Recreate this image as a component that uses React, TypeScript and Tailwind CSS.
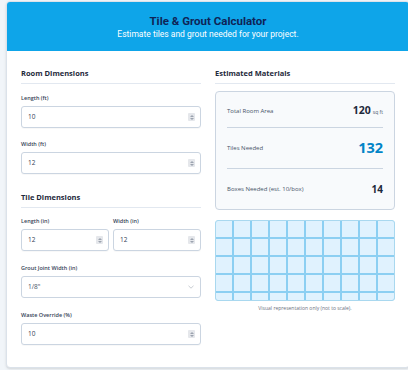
import React from "react";

const body = { fontFamily: '"Open Sans", "Noto Sans", sans-serif' };
const head = { fontFamily: 'Roboto, "Open Sans", sans-serif' };

function Spinner() {
  return (
    <div className="flex h-[8px] w-[7px] flex-col items-center justify-center gap-[1px] rounded-[1px] bg-[#e5e7eb]">
      <svg width="4" height="2" viewBox="0 0 4 2"><path d="M0 2L2 0L4 2Z" fill="#9ca3af" /></svg>
      <svg width="4" height="2" viewBox="0 0 4 2"><path d="M0 0L2 2L4 0Z" fill="#9ca3af" /></svg>
    </div>
  );
}

function Label({ children }: { children: React.ReactNode }) {
  return <div className="h-[8px] text-[5.5px] font-semibold leading-[8px] text-[#334155]">{children}</div>;
}

function NumInput({ value }: { value: string }) {
  return (
    <div className="mt-[4px] flex h-[22px] items-center justify-between rounded-[3px] border border-[#cbd5e1] bg-white pl-[6px] pr-[5px] shadow-[0_1px_1px_rgba(0,0,0,0.03)]">
      <span className="text-[6.5px] text-[#334155]">{value}</span>
      <Spinner />
    </div>
  );
}

function Field({ label, value, className = "" }: { label: string; value: string; className?: string }) {
  return (
    <div className={className}>
      <Label>{label}</Label>
      <NumInput value={value} />
    </div>
  );
}

function Heading({ children }: { children: React.ReactNode }) {
  return (
    <div className="h-[16px] border-b border-[#e2e8f0] text-[7.5px] font-bold leading-[10px] text-[#1e293b]">
      {children}
    </div>
  );
}

export default function App() {
  const cells = Array.from({ length: 50 });
  return (
    <div className="h-[370px] w-[408px] overflow-hidden bg-[#f1f5f9] pl-[6px] pt-[1px]" style={body}>
      <div className="w-[404px] overflow-hidden rounded-[4px] border border-[#dbe2ea] bg-white shadow-sm">
        <div className="flex h-[49px] flex-col items-center justify-center bg-[#0ea5e9]" style={head}>
          <div className="text-[11.5px] font-bold leading-[14px] text-[#0f2456]">Tile &amp; Grout Calculator</div>
          <div className="text-[8.5px] leading-[12px] text-white">Estimate tiles and grout needed for your project.</div>
        </div>
        <div className="flex gap-[14px] px-[14px] pb-[22px] pt-[17px]">
          <div className="w-[181px]">
            <Heading>Room Dimensions</Heading>
            <Field className="mt-[10px]" label="Length (ft)" value="10" />
            <Field className="mt-[12px]" label="Width (ft)" value="12" />
            <div className="mt-[18px]">
              <Heading>Tile Dimensions</Heading>
            </div>
            <div className="mt-[9px] grid grid-cols-2 gap-[4px]">
              <Field label="Length (in)" value="12" />
              <Field label="Width (in)" value="12" />
            </div>
            <div className="mt-[13px]">
              <Label>Grout Joint Width (in)</Label>
              <div className="mt-[4px] flex h-[22px] items-center justify-between rounded-[3px] border border-[#cbd5e1] bg-white pl-[6px] pr-[6px]">
                <span className="text-[6.5px] text-[#475569]">1/8"</span>
                <svg width="6" height="4" viewBox="0 0 6 4">
                  <path d="M0.5 0.8L3 3.2L5.5 0.8" fill="none" stroke="#a3a9b3" strokeWidth="0.6" />
                </svg>
              </div>
            </div>
            <Field className="mt-[13px]" label="Waste Override (%)" value="10" />
          </div>
          <div className="w-[181px]">
            <Heading>Estimated Materials</Heading>
            <div className="mt-[7px] rounded-[4px] border border-[#cbd5e1] bg-[#f8fafc] px-[11px] pt-[3px]">
              <div className="flex h-[33px] items-center justify-between border-b border-[#cbd5e1]">
                <span className="text-[6px] font-medium text-[#475569]">Total Room Area</span>
                <span className="flex items-baseline gap-[2px]">
                  <span className="text-[10.5px] font-bold text-[#1e293b]">120</span>
                  <span className="text-[5px] text-[#475569]">sq ft</span>
                </span>
              </div>
              <div className="flex h-[41px] items-center justify-between border-b border-[#cbd5e1]">
                <span className="text-[6px] font-medium text-[#475569]">Tiles Needed</span>
                <span className="text-[14.5px] font-bold text-[#0284c7]">132</span>
              </div>
              <div className="flex h-[40px] items-center justify-between">
                <span className="text-[6px] font-medium text-[#475569]">Boxes Needed (est. 10/box)</span>
                <span className="text-[10px] font-bold text-[#1e293b]">14</span>
              </div>
            </div>
            <div className="mt-[10px] h-[81px] overflow-hidden rounded-[3px] border border-[#a9d8ef] bg-[#8ccff2]">
              <div className="grid grid-cols-10 gap-[2px]">
                {cells.map((_, i) => (
                  <div key={i} className="h-[16px] bg-[#e0f2fe]" />
                ))}
              </div>
            </div>
            <div className="mt-[4px] text-center text-[5px] text-[#6b7280]">Visual representation only (not to scale).</div>
          </div>
        </div>
      </div>
    </div>
  );
}
